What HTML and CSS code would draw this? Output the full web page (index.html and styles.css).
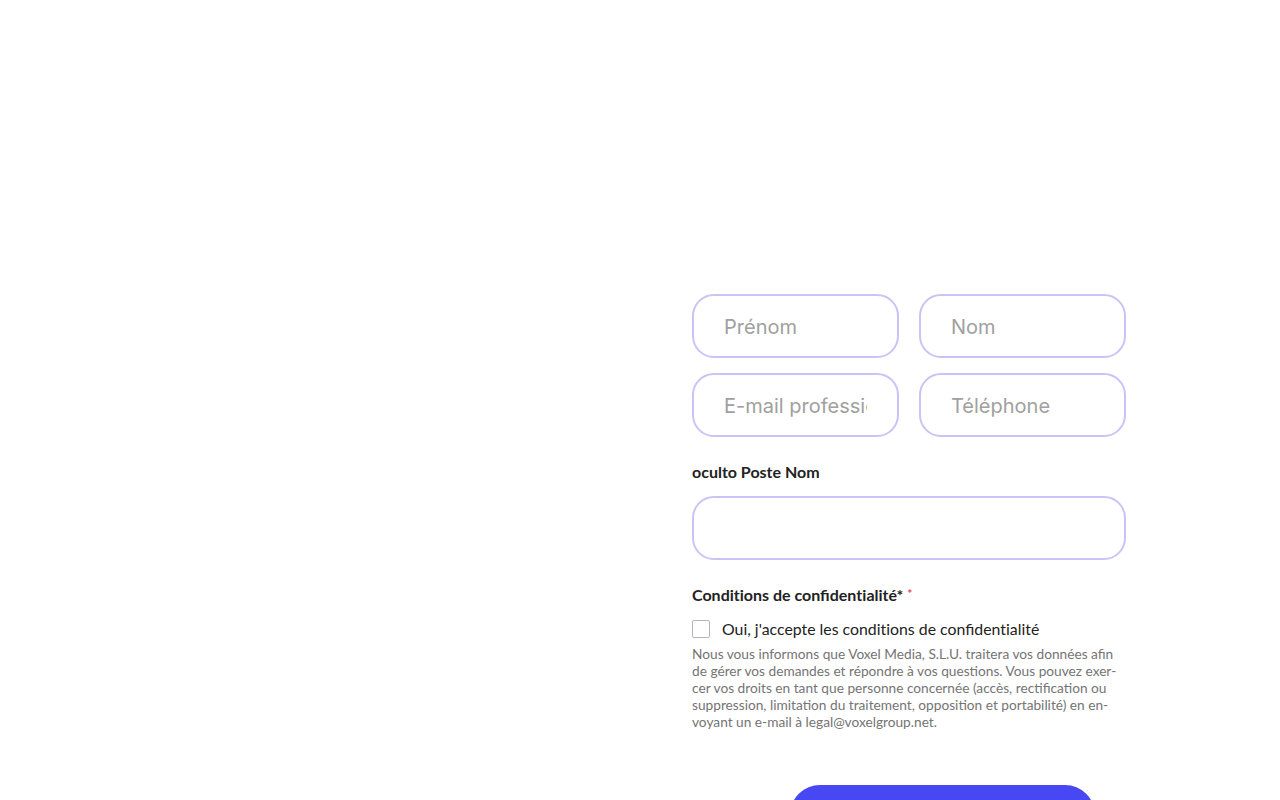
FILE: index.html
```html
<!DOCTYPE html>
<html lang="fr">
<head>
<meta charset="utf-8">
<link rel="stylesheet" href="styles.css">
</head>
<body>
<form class="form">
  <div class="row">
    <input class="field" type="text" placeholder="Prénom">
    <input class="field" type="text" placeholder="Nom">
  </div>
  <div class="row">
    <input class="field" type="text" placeholder="E-mail professionnel">
    <input class="field" type="text" placeholder="Téléphone">
  </div>
  <label class="label">oculto Poste Nom</label>
  <input class="field wide" type="text">
  <div class="label cond">Condi<span class="nl">t</span>ions de confiden<span class="nl">t</span>ialité* <span class="req">*</span></div>
  <label class="check">
    <span class="box"></span>
    <span>Oui, j'accepte les condi<span class="nl">t</span>ions de confiden<span class="nl">t</span>ialité</span>
  </label>
  <p class="legal">Nous vous informons que Voxel Media, S.L.U. traitera vos données afin de gérer vos demandes et répondre à vos questions. Vous pouvez exer&shy;cer vos droits en tant que personne concernée (accès, rectification ou suppression, limitation du traitement, opposition et portabilité) en en&shy;voyant un e-mail à legal@voxelgroup.net.</p>
  <button class="submit" type="button"></button>
</form>
</body>
</html>
```
FILE: styles.css
```css
html, body {
  margin: 0;
  padding: 0;
  background: #fff;
  overflow: hidden;
  height: 800px;
}
.form {
  width: 434px;
  margin-left: 692px;
  padding-top: 294px;
  display: flex;
  flex-direction: column;
  font-family: Lato, "Liberation Sans", sans-serif;
}
.row {
  display: flex;
  gap: 20px;
  margin-bottom: 15px;
}
.field {
  box-sizing: border-box;
  width: 207px;
  height: 64px;
  border: 2px solid #cbc3f6;
  border-radius: 22px;
  padding: 1px 30px 0;
  font-family: Inter, "Noto Sans", sans-serif;
  font-size: 20px;
  color: #333;
  background: #fff;
  outline: none;
}
.field::placeholder {
  color: #a0a0a0;
}
.wide {
  width: 434px;
}
.label {
  font-weight: 700;
  font-size: 16px;
  color: #222;
  line-height: 20px;
  margin-top: 10px;
  margin-bottom: 14px;
}
.cond {
  margin-top: 24px;
  margin-bottom: 14px;
}
.nl {
  letter-spacing: 0.01px;
}
.req {
  color: #e24b4b;
  font-size: 12px;
  vertical-align: 3px;
}
.check {
  display: flex;
  align-items: center;
  gap: 12px;
  font-size: 15.85px;
  color: #222;
  line-height: 20px;
}
.box {
  box-sizing: border-box;
  width: 18px;
  height: 18px;
  border: 1px solid #b5b5b5;
  border-radius: 2px;
  background: #fff;
}
.legal {
  margin: 6px 0 0;
  font-size: 13.7px;
  line-height: 17px;
  color: #747474;
  hyphens: manual;
}
.submit {
  margin-top: 55px;
  margin-left: 98px;
  width: 305px;
  height: 60px;
  border: none;
  border-radius: 30px;
  background: #4747f3;
}
```
